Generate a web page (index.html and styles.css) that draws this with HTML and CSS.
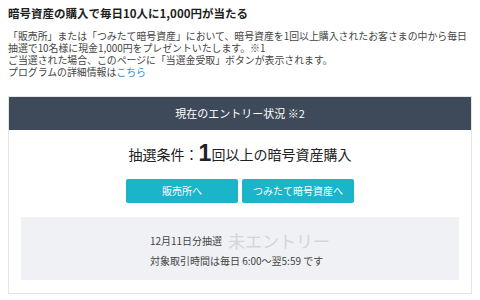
FILE: index.html
```html
<!DOCTYPE html>
<html lang="ja">
<head>
  <meta charset="UTF-8">
  <meta name="viewport" content="width=device-width, initial-scale=1.0">
  <title>毎日10人に1,000円が当たる</title>
  <link rel="stylesheet" href="styles.css">
</head>
<body>
  <h1 class="title">暗号資産の購入で毎日10人に1,000円が当たる</h1>

  <!-- Campaign description -->
  <p class="lead">
    「販売所」または「つみたて暗号資産」において、暗号資産を1回以上購入されたお客さまの中から毎日抽選で10名様に現金1,000円をプレゼントいたします。※1<br>
    ご当選された場合、このページに「当選金受取」ボタンが表示されます。<br>
    プログラムの詳細情報は<a href="#" class="link">こちら</a>
  </p>

  <!-- Entry status -->
  <div class="entry-box">
    <div class="entry-head">現在のエントリー状況 ※2</div>

    <div class="condition">抽選条件：<span class="big-num">1</span>回以上の暗号資産購入</div>

    <div class="buttons">
      <a href="#" class="btn">販売所へ</a>
      <a href="#" class="btn">つみたて暗号資産へ</a>
    </div>

    <div class="status-panel">
      <div class="status-inner">
        <div class="status-row">
          <span class="draw-date">12月11日分抽選</span>
          <span class="status-label">未エントリー</span>
        </div>
        <div class="status-time">対象取引時間は毎日 6:00〜翌5:59 です</div>
      </div>
    </div>
  </div>
</body>
</html>
```

FILE: styles.css
```css
/* General Styles */
body {
  margin: 0;
  padding: 5px 8px 0;
  font-family: "Noto Sans CJK JP", "Noto Sans", sans-serif;
  color: #333;
  background-color: #fff;
}

.title {
  margin: 0;
  font-size: 11.5px;
  line-height: 16px;
  font-weight: bold;
  color: #1e1e1e;
}

.lead {
  margin: 9px -4px 18px 0; /* text runs a little past the box on the right */
  font-size: 9.9px;
  line-height: 12px;
  color: #444;
}

.link {
  color: #2f8fd8;
  text-decoration: none;
}

/* Entry status box */
.entry-box {
  border: 1px solid #e2e4e6;
  padding-bottom: 13px;
}

.entry-head {
  height: 33px;
  line-height: 33px;
  text-align: center;
  font-size: 11px;
  color: #fff;
  background-color: #3e4a59;
}

.condition {
  margin-top: 11px;
  text-align: center;
  font-size: 14px;
  line-height: 24px;
  color: #222;
}

.big-num {
  font-size: 23px;
  font-weight: bold;
  font-family: "Liberation Sans", Arial, sans-serif;
  vertical-align: -1px;
}

.buttons {
  display: flex;
  justify-content: center;
  gap: 4px;
  margin-top: 13px;
}

.btn {
  width: 112px;
  height: 24px;
  line-height: 24px;
  text-align: center;
  font-size: 10px;
  color: #fff;
  text-decoration: none;
  background-color: #1ab4cb;
  border-radius: 2px;
}

/* Gray result panel */
.status-panel {
  margin: 14px 12px 0;
  padding: 12px 0 9px;
  background-color: #eff1f5;
  text-align: center;
}

.status-inner {
  display: inline-block;
  text-align: left;
}

.status-row {
  display: flex;
  align-items: center;
  gap: 6px;
  height: 22px;
}

.draw-date {
  font-size: 10px;
  color: #444;
}

.status-label {
  font-size: 17px;
  color: #d2d5d9;
}

.status-time {
  font-size: 10px;
  line-height: 20px;
  color: #444;
}
```
